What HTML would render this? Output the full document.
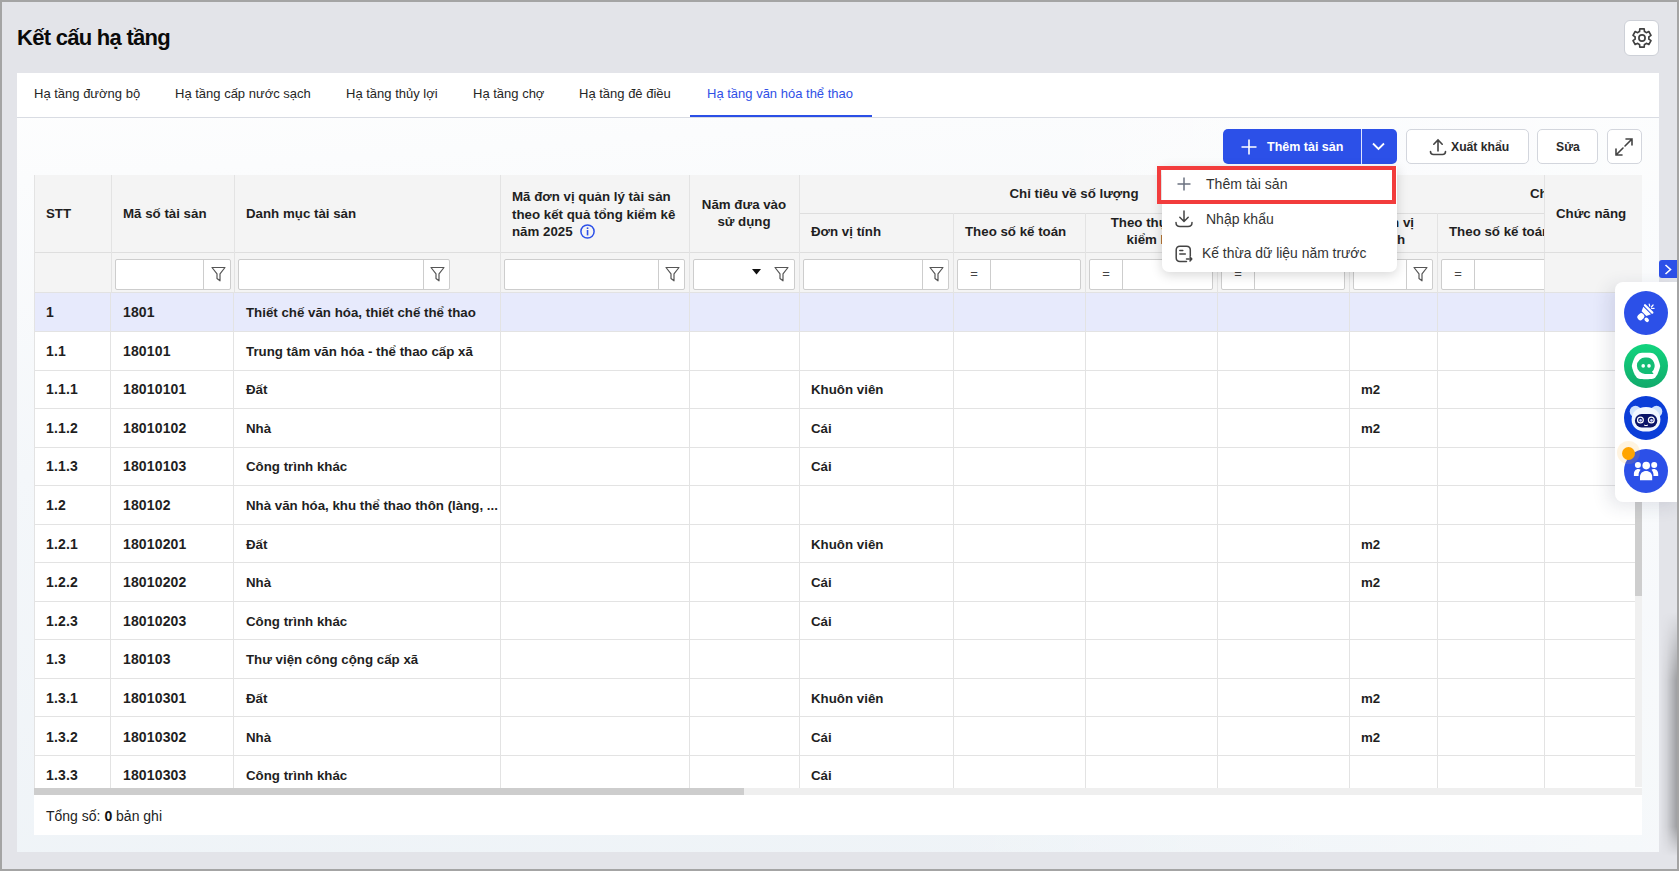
<!DOCTYPE html>
<html><head><meta charset="utf-8"><title>Kết cấu hạ tầng</title>
<style>
*{box-sizing:border-box;margin:0;padding:0}
html,body{width:1679px;height:871px;overflow:hidden}
body{position:relative;background:#a4a4a4;font-family:"Liberation Sans",sans-serif;color:#212121}
.abs{position:absolute}
.t{position:absolute;white-space:nowrap;font-family:"Liberation Sans",sans-serif}
#app{position:absolute;left:2px;top:2px;width:1675px;height:867px;background:#e3e4e9;overflow:hidden}
.hd{font-weight:700;font-size:13.3px;color:#1f1f1f}
.bd{font-weight:700;font-size:13.3px;color:#1f1f1f}
.vl{position:absolute;width:1px;background:#e3e3e3}
.hl{position:absolute;height:1px;background:#e3e3e3}
.fin{position:absolute;background:#fff;border:1px solid #cdcdcd;border-radius:2px;height:30px}
.fdiv{position:absolute;top:0;bottom:0;width:1px;background:#cdcdcd}
.btn{position:absolute;border:1px solid #d3d6dd;background:#fff;border-radius:5px}
</style></head><body>

<div id="app">
<div class="t" style="left:15px;top:22.8px;font-size:22px;line-height:26px;font-weight:700;color:#0a0a0a;letter-spacing:-0.72px">Kết cấu hạ tầng</div>
<div class="abs" style="left:1622px;top:18px;width:35px;height:36px;background:#fff;border:1px solid #cdd0d7;border-radius:6px"></div>
<svg class="abs" style="left:1628px;top:24px" width="24" height="24" viewBox="0 0 24 24" fill="none" stroke="#404040" stroke-width="1.65" stroke-linejoin="round"><path d="M9.53 5.56L9.81 2.86L14.19 2.86L14.47 5.56A6.9 6.9 0 0 1 16.34 6.64L18.82 5.53L21.01 9.33L18.82 10.92A6.9 6.9 0 0 1 18.82 13.08L21.01 14.67L18.82 18.47L16.34 17.36A6.9 6.9 0 0 1 14.47 18.44L14.19 21.14L9.81 21.14L9.53 18.44A6.9 6.9 0 0 1 7.66 17.36L5.18 18.47L2.99 14.67L5.18 13.08A6.9 6.9 0 0 1 5.18 10.92L2.99 9.33L5.18 5.53L7.66 6.64A6.9 6.9 0 0 1 9.53 5.56Z"/><circle cx="12" cy="12" r="3.1"/></svg>
<div class="abs" style="left:15px;top:71px;width:1642px;height:779px;background:linear-gradient(90deg,rgba(255,255,255,0) 55%,rgba(255,255,255,0.45) 100%),linear-gradient(176deg,#fefefe 0%,#fbfcfd 12%,#f4f7fa 45%,#eef3f7 100%)"></div>
<div class="abs" style="left:15px;top:71px;width:1642px;height:45px;background:#fff;border-bottom:1px solid #d9dce3"></div>
<div class="t" style="left:32px;top:83px;font-size:13px;line-height:17px;color:#262626">Hạ tầng đường bộ</div>
<div class="t" style="left:173px;top:83px;font-size:13px;line-height:17px;color:#262626">Hạ tầng cấp nước sạch</div>
<div class="t" style="left:344px;top:83px;font-size:13px;line-height:17px;color:#262626">Hạ tầng thủy lợi</div>
<div class="t" style="left:471px;top:83px;font-size:13px;line-height:17px;color:#262626">Hạ tầng chợ</div>
<div class="t" style="left:577px;top:83px;font-size:13px;line-height:17px;color:#262626">Hạ tầng đê điều</div>
<div class="t" style="left:705px;top:83px;font-size:13px;line-height:17px;color:#3050e6">Hạ tầng văn hóa thể thao</div>
<div class="abs" style="left:688px;top:113px;width:182px;height:2px;background:#2b4fe6"></div>
<div class="abs" style="left:1221px;top:127px;width:174px;height:35px;background:#2c50e8;border-radius:5px"></div>
<div class="abs" style="left:1359px;top:127px;width:1px;height:35px;background:#dfe5ff"></div>
<svg class="abs" style="left:1239px;top:137px" width="16" height="16" viewBox="0 0 16 16" stroke="#fff" stroke-width="1.6"><path d="M8 0.5V15.5M0.5 8H15.5"/></svg>
<div class="t" style="left:1265px;top:137.2px;font-size:12.5px;line-height:17px;font-weight:700;color:#fff">Thêm tài sản</div>
<svg class="abs" style="left:1370px;top:140px" width="13" height="9" viewBox="0 0 13 9" fill="none" stroke="#fff" stroke-width="1.8"><path d="M1 1.5L6.5 7L12 1.5"/></svg>
<div class="btn" style="left:1404px;top:127px;width:123px;height:35px"></div>
<svg class="abs" style="left:1427px;top:136px" width="18" height="18" viewBox="0 0 18 18" fill="none" stroke="#444" stroke-width="1.6" stroke-linecap="round"><path d="M9 13V2M4.8 6.2L9 2l4.2 4.2M1.5 13.5c0 2 1 3 3 3h9c2 0 3-1 3-3"/></svg>
<div class="t" style="left:1449px;top:137px;font-size:12.2px;line-height:17px;font-weight:700;color:#2a2a2a">Xuất khẩu</div>
<div class="btn" style="left:1535px;top:127px;width:61px;height:35px"></div>
<div class="t" style="left:1554px;top:137px;font-size:12.2px;line-height:17px;font-weight:700;color:#2a2a2a">Sửa</div>
<div class="btn" style="left:1605px;top:127px;width:35px;height:35px"></div>
<svg class="abs" style="left:1612px;top:135px" width="20" height="20" viewBox="0 0 20 20" fill="none" stroke="#444" stroke-width="1.6" stroke-linecap="round"><path d="M12 2h6v6M18 2l-7 7M8 18H2v-6M2 18l7-7"/></svg>
<div class="abs" style="left:32px;top:173px;width:1608px;height:117px;background:#f4f4f4"></div>
<div class="abs" style="left:32px;top:290px;width:1608px;height:543px;background:#fff"></div>
<div class="abs" style="left:32px;top:291px;width:1608px;height:38px;background:#e7eafc"></div>
<div class="hl" style="left:32px;top:250px;width:1608px;background:#dedede"></div>
<div class="hl" style="left:797px;top:211px;width:745px;background:#dedede"></div>
<div class="hl" style="left:32px;top:290px;width:1608px;background:#e2e2e2"></div>
<div class="hl" style="left:32px;top:329px;width:1601px"></div>
<div class="hl" style="left:32px;top:368px;width:1601px"></div>
<div class="hl" style="left:32px;top:406px;width:1601px"></div>
<div class="hl" style="left:32px;top:445px;width:1601px"></div>
<div class="hl" style="left:32px;top:483px;width:1601px"></div>
<div class="hl" style="left:32px;top:522px;width:1601px"></div>
<div class="hl" style="left:32px;top:560px;width:1601px"></div>
<div class="hl" style="left:32px;top:599px;width:1601px"></div>
<div class="hl" style="left:32px;top:637px;width:1601px"></div>
<div class="hl" style="left:32px;top:676px;width:1601px"></div>
<div class="hl" style="left:32px;top:714px;width:1601px"></div>
<div class="hl" style="left:32px;top:753px;width:1601px"></div>
<div class="vl" style="left:32px;top:173px;height:613px"></div>
<div class="vl" style="left:109px;top:173px;height:117px"></div>
<div class="vl" style="left:232px;top:173px;height:117px"></div>
<div class="vl" style="left:498px;top:173px;height:117px"></div>
<div class="vl" style="left:687px;top:173px;height:117px"></div>
<div class="vl" style="left:797px;top:173px;height:117px"></div>
<div class="vl" style="left:951px;top:211px;height:79px"></div>
<div class="vl" style="left:1083px;top:211px;height:79px"></div>
<div class="vl" style="left:1215px;top:211px;height:79px"></div>
<div class="vl" style="left:1347px;top:173px;height:117px"></div>
<div class="vl" style="left:1435px;top:211px;height:79px"></div>
<div class="vl" style="left:108px;top:290px;height:496px"></div>
<div class="vl" style="left:231px;top:290px;height:496px"></div>
<div class="vl" style="left:498px;top:290px;height:496px"></div>
<div class="vl" style="left:687px;top:290px;height:496px"></div>
<div class="vl" style="left:797px;top:290px;height:496px"></div>
<div class="vl" style="left:951px;top:290px;height:496px"></div>
<div class="vl" style="left:1083px;top:290px;height:496px"></div>
<div class="vl" style="left:1215px;top:290px;height:496px"></div>
<div class="vl" style="left:1347px;top:290px;height:496px"></div>
<div class="vl" style="left:1435px;top:290px;height:496px"></div>
<div class="t hd" style="left:44px;top:202.7px;line-height:17.6px;">STT</div>
<div class="t hd" style="left:121px;top:202.7px;line-height:17.6px;">Mã số tài sản</div>
<div class="t hd" style="left:244px;top:202.7px;line-height:17.6px;">Danh mục tài sản</div>
<div class="t hd" style="left:510px;top:185.8px;line-height:17.8px">Mã đơn vị quản lý tài sản<br>theo kết quả tổng kiểm kê<br>năm 2025</div>
<svg class="abs" style="left:578px;top:221.5px" width="15" height="15" viewBox="0 0 15 15"><circle cx="7.5" cy="7.5" r="6.6" fill="none" stroke="#2c50e8" stroke-width="1.5"/><rect x="6.75" y="3.4" width="1.6" height="1.6" fill="#2c50e8"/><rect x="6.75" y="6" width="1.6" height="5.4" fill="#2c50e8"/></svg>
<div class="t hd" style="left:687px;top:193.5px;width:110px;text-align:center;line-height:17.6px">Năm đưa vào<br>sử dụng</div>
<div class="t hd" style="left:797px;top:183px;width:550px;text-align:center;line-height:17.6px">Chỉ tiêu về số lượng</div>
<div class="t hd" style="left:809px;top:220.5px;line-height:17.6px;">Đơn vị tính</div>
<div class="t hd" style="left:963px;top:220.5px;line-height:17.6px;">Theo số kế toán</div>
<div class="t hd" style="left:1083px;top:211.5px;width:132px;text-align:center;line-height:17.7px">Theo thực tế<br>kiểm kê</div>
<div class="t hd" style="left:1215px;top:220.5px;width:132px;text-align:center;line-height:17.6px">Chênh lệch</div>
<div class="t hd" style="left:1347px;top:211.5px;width:88px;text-align:center;line-height:17.7px">Đơn vị<br>tính</div>
<div class="t hd" style="left:1447px;top:220.5px;line-height:17.6px;">Theo số kế toán</div>
<div class="t hd" style="left:1528px;top:183px;line-height:17.6px">Chỉ tiêu về giá trị</div>
<div class="fin" style="left:113px;top:257px;width:116px;height:31px"><div class="fdiv" style="left:87px"></div><div class="abs" style="left:94.5px;top:6px"><svg width="15" height="16" viewBox="0 0 15 16" fill="none" stroke="#555" stroke-width="1.2" stroke-linejoin="round"><path d="M1 1.5h13L9 7.8v7L6 12.5V7.8z"/></svg></div></div>
<div class="fin" style="left:236px;top:257px;width:212px;height:31px"><div class="fdiv" style="left:184px"></div><div class="abs" style="left:191.0px;top:6px"><svg width="15" height="16" viewBox="0 0 15 16" fill="none" stroke="#555" stroke-width="1.2" stroke-linejoin="round"><path d="M1 1.5h13L9 7.8v7L6 12.5V7.8z"/></svg></div></div>
<div class="fin" style="left:502px;top:257px;width:181px;height:31px"><div class="fdiv" style="left:153px"></div><div class="abs" style="left:160.0px;top:6px"><svg width="15" height="16" viewBox="0 0 15 16" fill="none" stroke="#555" stroke-width="1.2" stroke-linejoin="round"><path d="M1 1.5h13L9 7.8v7L6 12.5V7.8z"/></svg></div></div>
<div class="fin" style="left:691px;top:257px;width:102px;height:31px"><svg class="abs" style="left:58px;top:9px" width="9" height="6" viewBox="0 0 9 6"><path d="M0 0h9L4.5 5.5z" fill="#111"/></svg><div class="abs" style="left:79.60000000000002px;top:6px"><svg width="15" height="16" viewBox="0 0 15 16" fill="none" stroke="#555" stroke-width="1.2" stroke-linejoin="round"><path d="M1 1.5h13L9 7.8v7L6 12.5V7.8z"/></svg></div></div>
<div class="fin" style="left:801px;top:257px;width:146px;height:31px"><div class="fdiv" style="left:118px"></div><div class="abs" style="left:125.0px;top:6px"><svg width="15" height="16" viewBox="0 0 15 16" fill="none" stroke="#555" stroke-width="1.2" stroke-linejoin="round"><path d="M1 1.5h13L9 7.8v7L6 12.5V7.8z"/></svg></div></div>
<div class="fin" style="left:955px;top:257px;width:124px;height:31px"><div class="fdiv" style="left:32px"></div><div class="t" style="left:0;width:32px;text-align:center;top:4.5px;font-size:13px;line-height:17px;color:#444">=</div></div>
<div class="fin" style="left:1087px;top:257px;width:124px;height:31px"><div class="fdiv" style="left:32px"></div><div class="t" style="left:0;width:32px;text-align:center;top:4.5px;font-size:13px;line-height:17px;color:#444">=</div></div>
<div class="fin" style="left:1219px;top:257px;width:124px;height:31px"><div class="fdiv" style="left:32px"></div><div class="t" style="left:0;width:32px;text-align:center;top:4.5px;font-size:13px;line-height:17px;color:#444">=</div></div>
<div class="fin" style="left:1351px;top:257px;width:80px;height:31px"><div class="fdiv" style="left:52px"></div><div class="abs" style="left:59.0px;top:6px"><svg width="15" height="16" viewBox="0 0 15 16" fill="none" stroke="#555" stroke-width="1.2" stroke-linejoin="round"><path d="M1 1.5h13L9 7.8v7L6 12.5V7.8z"/></svg></div></div>
<div class="fin" style="left:1439px;top:257px;width:124px;height:31px"><div class="fdiv" style="left:32px"></div><div class="t" style="left:0;width:32px;text-align:center;top:4.5px;font-size:13px;line-height:17px;color:#444">=</div></div>
<div class="abs" style="left:32px;top:290px;width:1608px;height:496px;overflow:hidden">
<div class="t bd" style="left:12px;top:12.00px;line-height:17.6px;font-size:14px;letter-spacing:0.15px;">1</div>
<div class="t bd" style="left:89px;top:12.00px;line-height:17.6px;font-size:14px;letter-spacing:0.15px;">1801</div>
<div class="t bd" style="left:212px;top:12.00px;line-height:17.6px;">Thiết chế văn hóa, thiết chế thể thao</div>
<div class="t bd" style="left:12px;top:50.60px;line-height:17.6px;font-size:14px;letter-spacing:0.15px;">1.1</div>
<div class="t bd" style="left:89px;top:50.60px;line-height:17.6px;font-size:14px;letter-spacing:0.15px;">180101</div>
<div class="t bd" style="left:212px;top:50.60px;line-height:17.6px;">Trung tâm văn hóa - thể thao cấp xã</div>
<div class="t bd" style="left:12px;top:89.20px;line-height:17.6px;font-size:14px;letter-spacing:0.15px;">1.1.1</div>
<div class="t bd" style="left:89px;top:89.20px;line-height:17.6px;font-size:14px;letter-spacing:0.15px;">18010101</div>
<div class="t bd" style="left:212px;top:89.20px;line-height:17.6px;">Đất</div>
<div class="t bd" style="left:777px;top:89.20px;line-height:17.6px;">Khuôn viên</div>
<div class="t bd" style="left:1327px;top:89.20px;line-height:17.6px;">m2</div>
<div class="t bd" style="left:12px;top:127.80px;line-height:17.6px;font-size:14px;letter-spacing:0.15px;">1.1.2</div>
<div class="t bd" style="left:89px;top:127.80px;line-height:17.6px;font-size:14px;letter-spacing:0.15px;">18010102</div>
<div class="t bd" style="left:212px;top:127.80px;line-height:17.6px;">Nhà</div>
<div class="t bd" style="left:777px;top:127.80px;line-height:17.6px;">Cái</div>
<div class="t bd" style="left:1327px;top:127.80px;line-height:17.6px;">m2</div>
<div class="t bd" style="left:12px;top:166.40px;line-height:17.6px;font-size:14px;letter-spacing:0.15px;">1.1.3</div>
<div class="t bd" style="left:89px;top:166.40px;line-height:17.6px;font-size:14px;letter-spacing:0.15px;">18010103</div>
<div class="t bd" style="left:212px;top:166.40px;line-height:17.6px;">Công trình khác</div>
<div class="t bd" style="left:777px;top:166.40px;line-height:17.6px;">Cái</div>
<div class="t bd" style="left:12px;top:205.00px;line-height:17.6px;font-size:14px;letter-spacing:0.15px;">1.2</div>
<div class="t bd" style="left:89px;top:205.00px;line-height:17.6px;font-size:14px;letter-spacing:0.15px;">180102</div>
<div class="t bd" style="left:212px;top:205.00px;line-height:17.6px;">Nhà văn hóa, khu thể thao thôn (làng, ...</div>
<div class="t bd" style="left:12px;top:243.60px;line-height:17.6px;font-size:14px;letter-spacing:0.15px;">1.2.1</div>
<div class="t bd" style="left:89px;top:243.60px;line-height:17.6px;font-size:14px;letter-spacing:0.15px;">18010201</div>
<div class="t bd" style="left:212px;top:243.60px;line-height:17.6px;">Đất</div>
<div class="t bd" style="left:777px;top:243.60px;line-height:17.6px;">Khuôn viên</div>
<div class="t bd" style="left:1327px;top:243.60px;line-height:17.6px;">m2</div>
<div class="t bd" style="left:12px;top:282.20px;line-height:17.6px;font-size:14px;letter-spacing:0.15px;">1.2.2</div>
<div class="t bd" style="left:89px;top:282.20px;line-height:17.6px;font-size:14px;letter-spacing:0.15px;">18010202</div>
<div class="t bd" style="left:212px;top:282.20px;line-height:17.6px;">Nhà</div>
<div class="t bd" style="left:777px;top:282.20px;line-height:17.6px;">Cái</div>
<div class="t bd" style="left:1327px;top:282.20px;line-height:17.6px;">m2</div>
<div class="t bd" style="left:12px;top:320.80px;line-height:17.6px;font-size:14px;letter-spacing:0.15px;">1.2.3</div>
<div class="t bd" style="left:89px;top:320.80px;line-height:17.6px;font-size:14px;letter-spacing:0.15px;">18010203</div>
<div class="t bd" style="left:212px;top:320.80px;line-height:17.6px;">Công trình khác</div>
<div class="t bd" style="left:777px;top:320.80px;line-height:17.6px;">Cái</div>
<div class="t bd" style="left:12px;top:359.40px;line-height:17.6px;font-size:14px;letter-spacing:0.15px;">1.3</div>
<div class="t bd" style="left:89px;top:359.40px;line-height:17.6px;font-size:14px;letter-spacing:0.15px;">180103</div>
<div class="t bd" style="left:212px;top:359.40px;line-height:17.6px;">Thư viện công cộng cấp xã</div>
<div class="t bd" style="left:12px;top:398.00px;line-height:17.6px;font-size:14px;letter-spacing:0.15px;">1.3.1</div>
<div class="t bd" style="left:89px;top:398.00px;line-height:17.6px;font-size:14px;letter-spacing:0.15px;">18010301</div>
<div class="t bd" style="left:212px;top:398.00px;line-height:17.6px;">Đất</div>
<div class="t bd" style="left:777px;top:398.00px;line-height:17.6px;">Khuôn viên</div>
<div class="t bd" style="left:1327px;top:398.00px;line-height:17.6px;">m2</div>
<div class="t bd" style="left:12px;top:436.60px;line-height:17.6px;font-size:14px;letter-spacing:0.15px;">1.3.2</div>
<div class="t bd" style="left:89px;top:436.60px;line-height:17.6px;font-size:14px;letter-spacing:0.15px;">18010302</div>
<div class="t bd" style="left:212px;top:436.60px;line-height:17.6px;">Nhà</div>
<div class="t bd" style="left:777px;top:436.60px;line-height:17.6px;">Cái</div>
<div class="t bd" style="left:1327px;top:436.60px;line-height:17.6px;">m2</div>
<div class="t bd" style="left:12px;top:475.20px;line-height:17.6px;font-size:14px;letter-spacing:0.15px;">1.3.3</div>
<div class="t bd" style="left:89px;top:475.20px;line-height:17.6px;font-size:14px;letter-spacing:0.15px;">18010303</div>
<div class="t bd" style="left:212px;top:475.20px;line-height:17.6px;">Công trình khác</div>
<div class="t bd" style="left:777px;top:475.20px;line-height:17.6px;">Cái</div>
</div>
<div class="abs" style="left:1542px;top:173px;width:98px;height:117px;background:#f4f4f4;border-left:1px solid #e3e3e3"></div>
<div class="t hd" style="left:1554px;top:202.7px;line-height:17.6px">Chức năng</div>
<div class="hl" style="left:1542px;top:250px;width:98px;background:#dedede"></div>
<div class="hl" style="left:1542px;top:290px;width:98px;background:#e2e2e2"></div>
<div class="abs" style="left:1542px;top:290.5px;width:91px;height:495.5px;background:#fff;border-left:1px solid #e3e3e3"></div>
<div class="abs" style="left:1543px;top:291px;width:90px;height:38px;background:#e7eafc"></div>
<div class="hl" style="left:1542px;top:329px;width:91px"></div>
<div class="hl" style="left:1542px;top:368px;width:91px"></div>
<div class="hl" style="left:1542px;top:406px;width:91px"></div>
<div class="hl" style="left:1542px;top:445px;width:91px"></div>
<div class="hl" style="left:1542px;top:483px;width:91px"></div>
<div class="hl" style="left:1542px;top:522px;width:91px"></div>
<div class="hl" style="left:1542px;top:560px;width:91px"></div>
<div class="hl" style="left:1542px;top:599px;width:91px"></div>
<div class="hl" style="left:1542px;top:637px;width:91px"></div>
<div class="hl" style="left:1542px;top:676px;width:91px"></div>
<div class="hl" style="left:1542px;top:714px;width:91px"></div>
<div class="hl" style="left:1542px;top:753px;width:91px"></div>
<div class="abs" style="left:1633px;top:290px;width:7px;height:495px;background:#f0f0f0"></div>
<div class="abs" style="left:1633px;top:290px;width:7px;height:304px;background:#cecece"></div>
<div class="abs" style="left:32px;top:786px;width:1608px;height:7px;background:#efefef"></div>
<div class="abs" style="left:32px;top:786px;width:710px;height:7px;background:#cdcdcd"></div>
<div class="t" style="left:44px;top:805.8px;font-size:14px;line-height:17px;color:#222">Tổng số: <b style="color:#111">0</b> bản ghi</div>
<div class="abs" style="left:1160px;top:164px;width:235px;height:106px;background:#fff;border-radius:0 0 7px 7px;box-shadow:0 3px 12px rgba(0,0,0,0.16)"></div>
<svg class="abs" style="left:1175px;top:175px" width="14" height="14" viewBox="0 0 14 14" stroke="#6b7280" stroke-width="1.5"><path d="M7 0.5V13.5M0.5 7H13.5"/></svg>
<div class="t" style="left:1204px;top:173.5px;font-size:14.1px;line-height:17px;color:#333">Thêm tài sản</div>
<svg class="abs" style="left:1173px;top:208px" width="18" height="18" viewBox="0 0 18 18" fill="none" stroke="#444" stroke-width="1.5" stroke-linecap="round"><path d="M9 1v10.5M4.8 7.3L9 11.5l4.2-4.2M1 12.5c0 2.5 1.3 4 4 4h8c2.7 0 4-1.5 4-4"/></svg>
<div class="t" style="left:1204px;top:208.5px;font-size:14px;line-height:17px;color:#333">Nhập khẩu</div>
<svg class="abs" style="left:1173px;top:243px" width="18" height="18" viewBox="0 0 18 18" fill="none" stroke="#444" stroke-width="1.5" stroke-linecap="round" stroke-linejoin="round"><path d="M11.5 16.5H5c-2.5 0-3.8-1.3-3.8-3.8V5C1.2 2.5 2.5 1.2 5 1.2h6.5c2.5 0 3.8 1.3 3.8 3.8v6"/><path d="M4.8 5.5h3M4.8 9h5.5M11.5 14h5.3M15 12l1.8 2-1.8 2"/></svg>
<div class="t" style="left:1200px;top:243px;font-size:13.9px;line-height:17px;color:#333">Kế thừa dữ liệu năm trước</div>
<div class="abs" style="left:1155px;top:164px;width:239px;height:38px;border:4px solid #f23c3c"></div>
<div class="abs" style="left:1657px;top:258px;width:20px;height:18px;background:#2c50e8;border-radius:3px 0 0 3px"></div>
<svg class="abs" style="left:1662px;top:261.5px" width="8" height="11" viewBox="0 0 8 11" fill="none" stroke="#fff" stroke-width="1.6"><path d="M1.5 1l5 4.5-5 4.5"/></svg>
<div class="abs" style="left:1613px;top:280px;width:70px;height:220px;background:#fff;border-radius:8px;box-shadow:-6px 4px 18px rgba(40,50,80,0.12)"></div>
<div class="abs" style="left:1622px;top:289px;width:44px;height:44px;border-radius:50%;background:#2c50e8"></div>
<div class="abs" style="left:1622px;top:342px;width:44px;height:44px;border-radius:50%;background:linear-gradient(180deg,#12d47e,#11aa6b)"></div>
<div class="abs" style="left:1622px;top:394px;width:44px;height:44px;border-radius:50%;background:#0b3ed8"></div>
<div class="abs" style="left:1622px;top:447px;width:44px;height:44px;border-radius:50%;background:#2c50e8"></div>
<svg class="abs" style="left:1622px;top:289px" width="44" height="44" viewBox="0 0 44 44"><g transform="translate(24.6 18) rotate(-45)" fill="#fff"><rect x="-1.1" y="-6.3" width="2.3" height="12.6" rx="1.1"/><path d="M-2.1 -5.4L-2.1 5.4L-6.5 3.4L-6.5 -3.4Z"/><rect x="-14.6" y="-3" width="7.2" height="6" rx="2.6"/><rect x="-10.8" y="3.9" width="3.6" height="4.9" rx="1.8"/></g><path d="M25.2 13.2l.5 2M27.4 16l1.7-2M27.6 17.5l2.5-.2" stroke="#fff" stroke-width="1.2" stroke-linecap="round"/></svg>
<svg class="abs" style="left:1622px;top:342px" width="44" height="44" viewBox="0 0 44 44"><path d="M15 9.2C18 8.6 26 8.6 29 9.2 32.5 10.4 35 16 36.2 22 35 28 32.5 33.6 29 34.8 26 35.4 18 35.4 15 34.8 11.5 33.6 9 28 7.8 22 9 16 11.5 10.4 15 9.2Z" fill="#fff"/><path d="M22 13.6a8.2 8.2 0 1 0 0 16.3h7.6l-1.6-2.1a8.2 8.2 0 0 0-6-14.2z" fill="#13bd75"/><circle cx="19.2" cy="21.9" r="1.8" fill="#fff"/><circle cx="25" cy="21.9" r="1.8" fill="#fff"/></svg>
<svg class="abs" style="left:1622px;top:394px" width="44" height="44" viewBox="0 0 44 44"><circle cx="11.5" cy="15.5" r="5.8" fill="#cfe2fd"/><circle cx="32.5" cy="15.5" r="5.8" fill="#cfe2fd"/><path d="M22 11c8.5 0 14.4 5 14.4 12.5S31 35.6 22 35.6 7.6 31 7.6 23.5 13.5 11 22 11z" fill="#f2f7ff"/><rect x="10.9" y="17.9" width="22.4" height="13.7" rx="6.8" fill="#0a1468"/><circle cx="16.4" cy="24" r="2.9" fill="none" stroke="#fff" stroke-width="1.2"/><circle cx="27.3" cy="24" r="2.9" fill="none" stroke="#fff" stroke-width="1.2"/><circle cx="16.6" cy="24.4" r="1.3" fill="#cfd6ff"/><circle cx="27.5" cy="24.4" r="1.3" fill="#cfd6ff"/><path d="M20 29c1.3.8 2.7.8 4 0" stroke="#fff" stroke-width="1" fill="none"/></svg>
<svg class="abs" style="left:1622px;top:447px" width="44" height="44" viewBox="0 0 44 44" fill="#fff"><circle cx="13.9" cy="16.1" r="3"/><circle cx="22.2" cy="16.6" r="3.8"/><circle cx="30.2" cy="16.1" r="3"/><path d="M16 31.2v-3.5c0-3.4 2.7-5.8 6.1-5.8s6.1 2.4 6.1 5.8v3.5z" stroke="#fff" stroke-width="0" /><path d="M9.9 27v-1.8c0-3 1.8-5.2 4.4-5.2 1 0 1.7.3 2.3.7-1.3 1.4-2 3.3-2 5.4V27z"/><path d="M34.2 27v-1.8c0-3-1.8-5.2-4.4-5.2-1 0-1.7.3-2.3.7 1.3 1.4 2 3.3 2 5.4V27z"/></svg>
<div class="abs" style="left:1614.5px;top:439.3px;width:23px;height:23px;border-radius:50%;background:rgba(255,175,40,0.14)"></div>
<div class="abs" style="left:1620px;top:445px;width:13px;height:13px;border-radius:50%;background:#ffa400"></div>
<div class="abs" style="left:1658px;top:610px;width:17px;height:244px;background:linear-gradient(90deg,rgba(0,0,0,0),rgba(0,0,0,0.08) 40%,rgba(0,0,0,0.3));-webkit-mask-image:linear-gradient(180deg,transparent,#000 28%,#000 88%,transparent)"></div>
</div></body></html>
